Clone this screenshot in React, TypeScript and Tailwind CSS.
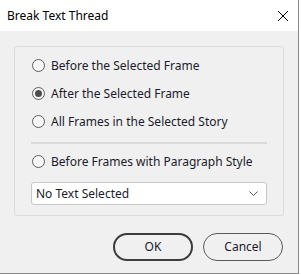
import { useState } from 'react';

const options = [
  'Before the Selected Frame',
  'After the Selected Frame',
  'All Frames in the Selected Story',
];

function Radio({ checked }: { checked: boolean }) {
  return (
    <span className="flex h-[13px] w-[13px] shrink-0 items-center justify-center rounded-full border border-[#5e5e5e] bg-[#f7f7f7]">
      {checked && <span className="h-[7px] w-[7px] rounded-full bg-[#4d4d4d]" />}
    </span>
  );
}

export default function App() {
  const [selected, setSelected] = useState(1);

  return (
    <div className="h-[275px] w-[301px] bg-white font-['Noto_Sans',sans-serif] text-[12px] text-[#1b1b2b]">
      <div className="flex h-[274px] w-[299px] flex-col border-r border-b border-[#8a8a8a] bg-[#f0f0f0]">
        {/* Title bar */}
        <div className="flex h-[31px] items-center justify-between bg-white pl-[7px] pr-[9px]">
          <span className="text-[12px] text-black">Break Text Thread</span>
          <svg width="12" height="12" viewBox="0 0 12 12" className="text-black">
            <path d="M1 1l10 10M11 1L1 11" stroke="currentColor" strokeWidth="1" />
          </svg>
        </div>

        {/* Group box */}
        <div className="ml-[14px] mt-[15px] w-[270px] rounded-[3px] border border-[#dcdcdc] px-[16px] pt-[12px] pb-[10px]">
          <div className="flex flex-col gap-[15px]">
            {options.map((label, i) => (
              <button
                key={label}
                onClick={() => setSelected(i)}
                className="flex h-[13px] items-center gap-[6px] pl-[1px] text-left"
              >
                <Radio checked={selected === i} />
                <span>{label}</span>
              </button>
            ))}
          </div>

          <div className="mt-[14px] h-[2px] bg-[#dadada]" />

          <button
            onClick={() => setSelected(3)}
            className="mt-[11px] flex h-[13px] items-center gap-[6px] pl-[1px] text-left"
          >
            <Radio checked={selected === 3} />
            <span>Before Frames with Paragraph Style</span>
          </button>

          <div className="mt-[14px] flex h-[23px] items-center justify-between rounded-[3px] border border-[#c8c8c8] bg-white pl-[4px] pr-[8px]">
            <span>No Text Selected</span>
            <svg width="9" height="5" viewBox="0 0 9 5">
              <path d="M0.5 0.5l4 4 4-4" fill="none" stroke="#555" strokeWidth="1" />
            </svg>
          </div>
        </div>

        {/* Buttons */}
        <div className="mt-[17px] flex justify-end gap-[10px] pr-[15px]">
          <button className="h-[28px] w-[80px] rounded-full border-2 border-[#3c3c3c] text-[12px]">
            OK
          </button>
          <button className="h-[28px] w-[80px] rounded-full border border-[#5a5a5a] text-[12px]">
            Cancel
          </button>
        </div>
      </div>
    </div>
  );
}
